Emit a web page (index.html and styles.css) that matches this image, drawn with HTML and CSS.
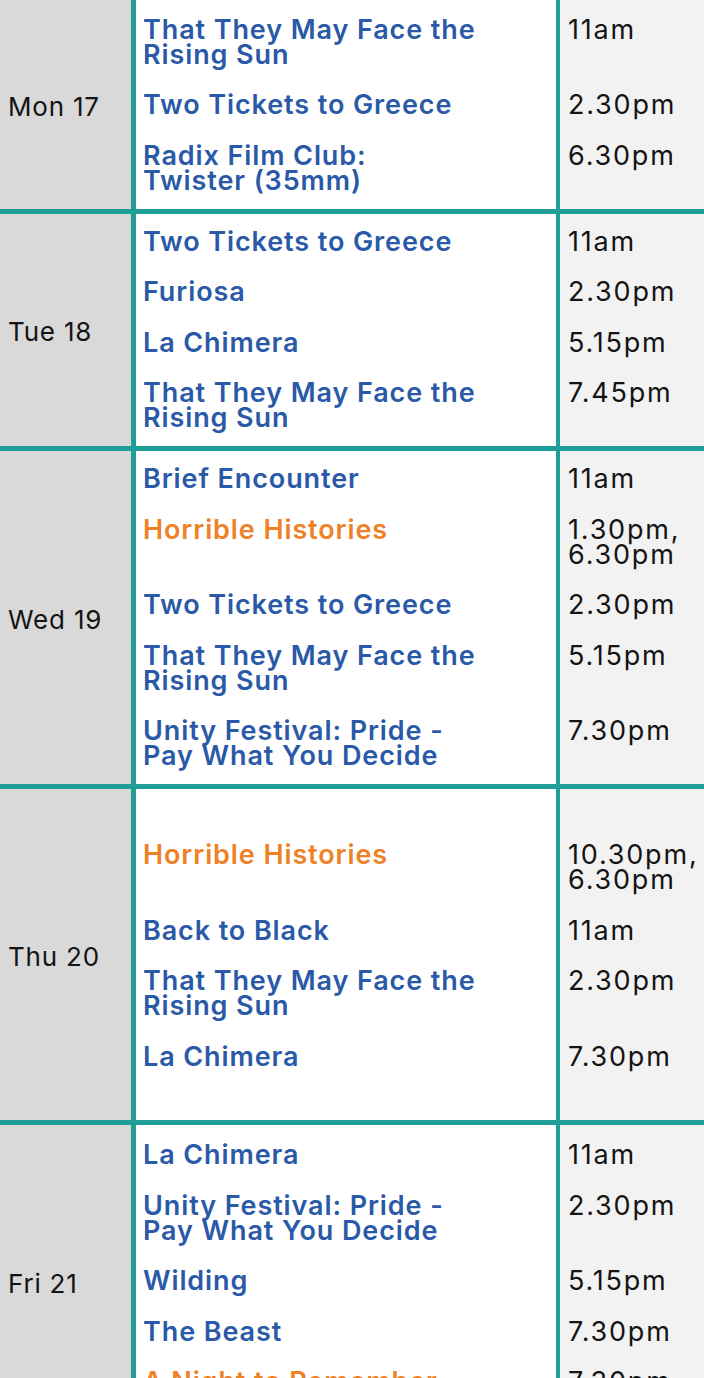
FILE: index.html
```html
<!DOCTYPE html>
<html lang="en">
<head>
<meta charset="utf-8">
<title>Listings</title>
<link rel="stylesheet" href="styles.css">
</head>
<body>
<div class="schedule">
  <section class="day day--first">
    <div class="day-label">Mon 17</div>
    <div class="shows">
      <div class="show"><div class="film">That They May Face the<br>Rising Sun</div><div class="time">11am</div></div>
      <div class="show"><div class="film">Two Tickets to Greece</div><div class="time">2.30pm</div></div>
      <div class="show"><div class="film">Radix Film Club:<br>Twister (35mm)</div><div class="time">6.30pm</div></div>
    </div>
  </section>
  <section class="day">
    <div class="day-label">Tue 18</div>
    <div class="shows">
      <div class="show"><div class="film">Two Tickets to Greece</div><div class="time">11am</div></div>
      <div class="show"><div class="film">Furiosa</div><div class="time">2.30pm</div></div>
      <div class="show"><div class="film">La Chimera</div><div class="time">5.15pm</div></div>
      <div class="show"><div class="film">That They May Face the<br>Rising Sun</div><div class="time">7.45pm</div></div>
    </div>
  </section>
  <section class="day">
    <div class="day-label">Wed 19</div>
    <div class="shows">
      <div class="show"><div class="film">Brief Encounter</div><div class="time">11am</div></div>
      <div class="show"><div class="film film--family">Horrible Histories</div><div class="time">1.30pm,<br>6.30pm</div></div>
      <div class="show"><div class="film">Two Tickets to Greece</div><div class="time">2.30pm</div></div>
      <div class="show"><div class="film">That They May Face the<br>Rising Sun</div><div class="time">5.15pm</div></div>
      <div class="show"><div class="film">Unity Festival: Pride -<br>Pay What You Decide</div><div class="time">7.30pm</div></div>
    </div>
  </section>
  <section class="day day--spaced">
    <div class="day-label">Thu 20</div>
    <div class="shows">
      <div class="show"><div class="film film--family">Horrible Histories</div><div class="time">10.30pm,<br>6.30pm</div></div>
      <div class="show"><div class="film">Back to Black</div><div class="time">11am</div></div>
      <div class="show"><div class="film">That They May Face the<br>Rising Sun</div><div class="time">2.30pm</div></div>
      <div class="show"><div class="film">La Chimera</div><div class="time">7.30pm</div></div>
    </div>
  </section>
  <section class="day day--last">
    <div class="day-label">Fri 21</div>
    <div class="shows">
      <div class="show"><div class="film">La Chimera</div><div class="time">11am</div></div>
      <div class="show"><div class="film">Unity Festival: Pride -<br>Pay What You Decide</div><div class="time">2.30pm</div></div>
      <div class="show"><div class="film">Wilding</div><div class="time">5.15pm</div></div>
      <div class="show"><div class="film">The Beast</div><div class="time">7.30pm</div></div>
      <div class="show"><div class="film film--family">A Night to Remember</div><div class="time">7.30pm</div></div>
    </div>
  </section>
</div>
</body>
</html>
```
FILE: styles.css
```css
html, body {
  margin: 0;
  padding: 0;
  background: #ffffff;
}

body {
  width: 704px;
  height: 1378px;
  overflow: hidden;
  font-family: Inter, "Liberation Sans", sans-serif;
}

.schedule {
  display: flex;
  flex-direction: column;
}

.day {
  display: flex;
  border-bottom: 5px solid #1e9e97;
}

.day-label {
  width: 136px;
  flex: none;
  background: #d9d9d9;
  border-right: 5px solid #1e9e97;
  display: flex;
  align-items: center;
  padding: 4px 0 0 8px;
  box-sizing: border-box;
  font-size: 26px;
  font-weight: 400;
  color: #141414;
  letter-spacing: 0.8px;
}

.shows {
  flex: 1;
  display: flex;
  flex-direction: column;
  gap: 25.5px;
  padding: 15px 0 16px;
  background: linear-gradient(to right, #ffffff 0 420px, #1e9e97 420px 424px, #f2f2f2 424px);
}

.day--first .shows {
  padding-top: 16.5px;
}

.day--spaced .shows {
  padding-top: 53px;
  padding-bottom: 51.5px;
}

.day--last .shows {
  padding-top: 17px;
  padding-bottom: 44px;
}

.show {
  display: flex;
  line-height: 25px;
  font-size: 26px;
}

.film {
  width: 424px;
  flex: none;
  box-sizing: border-box;
  padding-left: 7px;
  color: #2a5aa7;
  font-size: 27px;
  font-weight: 600;
  letter-spacing: 0.9px;
}

.film--family {
  color: #ef8127;
}

.time {
  flex: 1;
  padding-left: 8px;
  color: #141414;
  font-size: 27px;
  font-weight: 400;
  letter-spacing: 1.8px;
}
```
